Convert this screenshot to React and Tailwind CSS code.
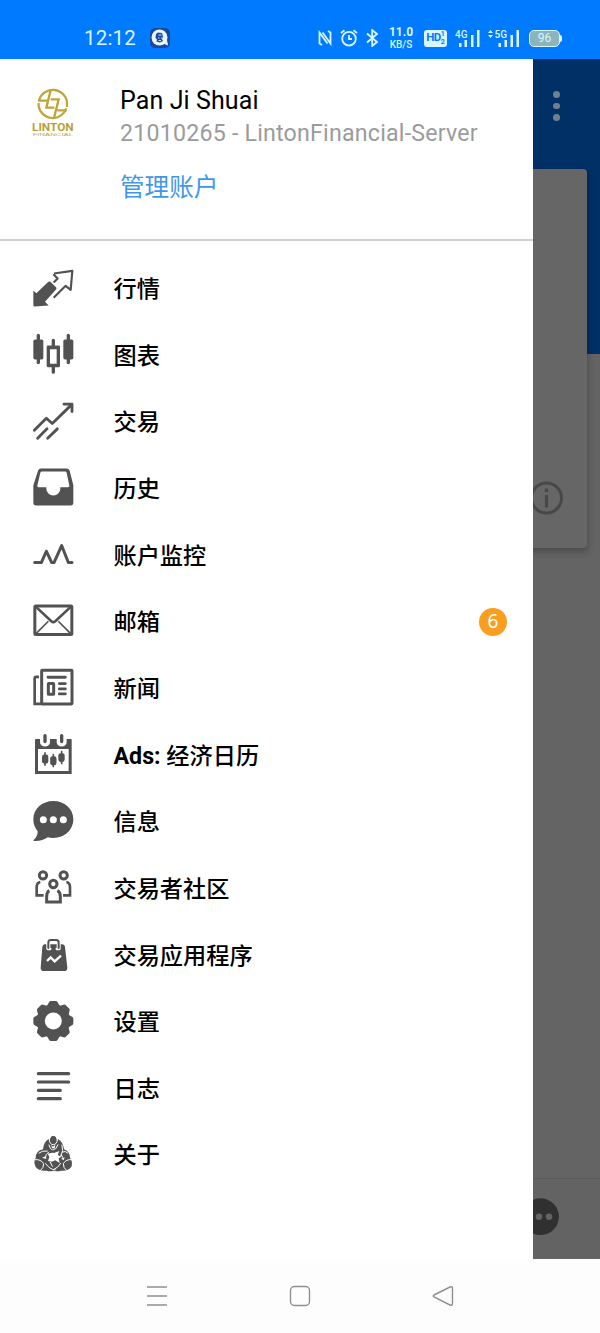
import React from "react";

const INK = "#525252";

function Quotes() {
  return (
    <>
      <path d="M40 105L49 113L85 79Q89 76 93 80L108 95Q111 98 108 102L75 139L86 150L44 153Q40 153 40 149Z" fill={INK} />
      <path d="M100 56L113 69L101 81M101 127L137 91L152 103L157 46L102 54" fill="none" stroke={INK} strokeWidth="6.500" strokeLinejoin="round" />
    </>
  );
}

function Charts() {
  return (
    <g fill={INK}>
      <rect x="40" y="254" width="30" height="60" rx="5" />
      <rect x="50" y="237" width="10" height="91" rx="5" />
      <rect x="130" y="254" width="30" height="60" rx="5" />
      <rect x="140" y="237" width="10" height="91" rx="5" />
      <path d="M95 257a5 5 0 0 1 10 0v15h11a4 4 0 0 1 4 4v57a4 4 0 0 1-4 4h-11v15a5 5 0 0 1-10 0v-15H84a4 4 0 0 1-4-4v-57a4 4 0 0 1 4-4h11zM90 283v44h20v-44z" />
    </g>
  );
}

function Trade() {
  return (
    <g fill="none" stroke={INK} strokeWidth="8.500" strokeLinecap="round" strokeLinejoin="round">
      <path d="M43 525 L79 489 L97 505 L154 449" />
      <path d="M132 447 H156 V469" />
      <path d="M53 549 L81 521 M83 549 L112 521" />
    </g>
  );
}

function History() {
  return (
    <path
      fillRule="evenodd"
      fill={INK}
      d="M62 42H140Q146 42 149 49L160 92V145Q160 153 152 153H48Q40 153 40 145V92L54 49Q57 42 62 42ZM66 51Q62 51 61 55L52 93Q51 98 56 98H79V103A21 20 0 0 0 121 103V98H144Q149 98 148 93L140 55Q139 51 135 51Z"
    />
  );
}

function Monitor() {
  return <path d="M44 323H64L79 289L95 323H102L125 272L145 323H156" fill="none" stroke={INK} strokeWidth="9" strokeLinecap="round" strokeLinejoin="round" />;
}

function Mail() {
  return (
    <g fill="none" stroke={INK}>
      <rect x="44.5" y="452" width="111" height="86" rx="3" strokeWidth="9" />
      <path d="M48 455L94 498Q100 503 106 498L152 455" strokeWidth="8" />
      <path d="M48 535L85 498M152 535L115 498" strokeWidth="5" />
    </g>
  );
}

function News() {
  return (
    <g fill="none" stroke={INK}>
      <rect x="65" y="47" width="91" height="101" rx="2" strokeWidth="9" />
      <path d="M57 67H48Q44 67 44 72V148H66" strokeWidth="8" />
      <path d="M84 68H136M118 87H136M118 103H136M118 118H136" strokeWidth="8.500" strokeLinecap="round" />
      <rect x="85" y="87" width="16" height="32" rx="1" strokeWidth="9" />
    </g>
  );
}

function Calendar() {
  return (
    <>
      <path fillRule="evenodd" fill={INK} d="M45 254Q45 252 48 252H60V262A14 12 0 0 0 90 262V252H110V262A14 12 0 0 0 140 262V252H153Q155 252 155 254V357H45ZM54 282V348H146V282Z" />
      <g stroke={INK} strokeLinecap="round">
        <path d="M75 242V260M125 242V260" strokeWidth="10" />
        <path d="M75 294V331M100 299V335M125 290V326" strokeWidth="5" />
      </g>
      <g fill={INK}>
        <rect x="66" y="299" width="19" height="27" rx="7" />
        <rect x="90.500" y="304" width="19" height="27" rx="7" />
        <rect x="115" y="295" width="19" height="26" rx="7" />
      </g>
    </>
  );
}

function Chat() {
  return (
    <>
      <path fill={INK} d="M100 437C134 437 160 461 160 492S134 548 100 548Q91 548 83 546Q68 558 42 557Q39 557 41 554Q53 544 53 528Q40 512 40 492C40 461 66 437 100 437Z" />
      <g fill="#fff">
        <circle cx="70" cy="493" r="10.500" />
        <circle cx="100" cy="493" r="10.500" />
        <circle cx="130" cy="493" r="10.500" />
      </g>
    </>
  );
}

function Community() {
  return (
    <g fill="none" stroke={INK} strokeWidth="9">
      <circle cx="69" cy="62" r="11" />
      <circle cx="131" cy="62" r="11" />
      <circle cx="100" cy="88" r="11" />
      <path d="M61 82Q50 84 50 98V122H71M139 82Q150 84 150 98V122H129" strokeWidth="8" />
      <path d="M88 108Q80 112 80 125V142H121V125Q121 112 112 108" strokeWidth="9" />
    </g>
  );
}

function Bag() {
  return (
    <>
      <path fill={INK} d="M74 268H126Q134 268 135 276L142 338Q142 348 133 348H71Q62 348 62 338L67 276Q68 268 74 268Z" />
      <g fill="none" strokeLinecap="round" strokeLinejoin="round">
        <path d="M85 279V262Q85 255 92 255H109Q116 255 116 262V279" stroke="#fff" strokeWidth="12" />
        <path d="M83 282H91M110 282H118" stroke="#fff" strokeWidth="7" />
        <path d="M85 279V263Q85 255 92 255H109Q116 255 116 263V279" stroke={INK} strokeWidth="6" />
        <path d="M81 318L92 307L104 319L123 302" stroke="#fff" strokeWidth="7" strokeLinecap="butt" strokeLinejoin="miter" />
      </g>
    </>
  );
}

const toothAngles = [0, 45, 90, 135, 180, 225, 270, 315];

function Gear() {
  return (
    <>
      <circle cx="100" cy="497" r="50" fill={INK} />
      {toothAngles.map((angle) => (
        <path key={angle} d="M79 455L87 441Q89 437 93 437H107Q111 437 113 441L121 455Z" fill={INK} transform={`rotate(${angle} 100 497)`} />
      ))}
      <circle cx="100" cy="497" r="25.500" fill="#fff" />
    </>
  );
}

function Journal() {
  return <path d="M55 57H146M55 82H146M55 107H121M55 132H121" stroke={INK} strokeWidth="9.500" strokeLinecap="round" />;
}

function About() {
  return (
    <>
      <g fill={INK}>
        <path d="M85 253Q72 260 69 283Q48 286 47 309Q40 320 46 334Q55 350 80 347Q91 351 100 347Q112 351 123 347Q147 349 155 334Q158 318 150 308Q149 288 132 283Q129 260 114 252Z" />
        <ellipse cx="100" cy="254" rx="10" ry="12" />
      </g>
      <g fill="none" stroke="#fff" strokeWidth="3" strokeLinecap="round">
        <ellipse cx="100" cy="255" rx="12" ry="14" />
        <path d="M87 270Q92 286 99 285Q108 285 114 269" />
        <path d="M46 314Q62 312 71 326Q72 338 61 347M154 314Q138 312 130 326Q129 338 140 347" />
        <path d="M57 294Q66 286 82 288M143 294Q137 286 127 291M126 270Q132 286 122 305M77 326Q88 343 106 345M122 325Q113 340 102 343" />
        <path d="M86 291Q76 298 76 308M91 322L97 334M124 299L128 307" />
      </g>
      <path fill="#fff" d="M83 296L96 293L104 293L118 288L113 300L124 305L116 310L119 324L106 316L95 320L84 318L88 306Z" />
      <path fill="#fff" d="M94 270L99 275L106 269L104 280H96ZM66 308L77 304L79 312ZM123 311L134 307L131 315Z" />
      <path fill={INK} d="M91 286L97 284L99 288L104 284L109 288L105 292H94Z" />
    </>
  );
}

const items = [
  { label: "行情", icon: Quotes, box: "33 28.5 132 144" },
  { label: "图表", icon: Charts, box: "33 228.5 132 144" },
  { label: "交易", icon: Trade, box: "33 428.4 132 144" },
  { label: "历史", icon: History, box: "33 28.4 132 144" },
  { label: "账户监控", icon: Monitor, box: "33 228.3 132 144" },
  { label: "邮箱", icon: Mail, box: "33 428.3 132 144", badge: 6 },
  { label: "新闻", icon: News, box: "33 28.2 132 144" },
  { label: "经济日历", prefix: "Ads:", icon: Calendar, box: "33 228.2 132 144" },
  { label: "信息", icon: Chat, box: "33 428.1 132 144" },
  { label: "交易者社区", icon: Community, box: "33 28 132 144" },
  { label: "交易应用程序", icon: Bag, box: "33 228 132 144" },
  { label: "设置", icon: Gear, box: "33 428 132 144" },
  { label: "日志", icon: Journal, box: "33 28 132 144" },
  { label: "关于", icon: About, box: "33 228 132 144" },
];

function StatusBar() {
  return (
    <header className="flex h-[59px] shrink-0 items-center bg-[#007aff] pt-[17px] pl-[84px] text-[#d9f6ff]">
      <span className="w-[66px] text-[20.5px] leading-none tracking-[0.2px]">12:12</span>
      <svg className="size-5" viewBox="0 0 20 20">
        <rect width="20" height="20" rx="5" fill="#164a9f" />
        <ellipse cx="9.500" cy="9.500" rx="8" ry="8" fill="#e8f4ff" />
        <path d="M13 15.500L18 17.500L17 12Z" fill="#e8f4ff" />
        <path d="M6 6L8 4.500L12 5L13 8.500L12 11L13 13L10 14.500L6.500 13.500L7 11.500L5.500 10Z" fill="#164a9f" />
        <path d="M8.500 7H11.500M8 10H9.500M11 10H12M8.500 12.500H11" stroke="#e8f4ff" strokeWidth="0.900" />
      </svg>
      <svg className="ml-[148px] h-[18px] w-[14px]" viewBox="0 0 14 18" fill="none" stroke="currentColor" strokeWidth="1.800">
        <path d="M4 16L1.500 14.500V3.500L9.500 14.500M10 2L12.500 3.500V14.500L4.500 3.500" />
      </svg>
      <svg className="ml-2 size-[18px]" viewBox="0 0 18 18" fill="none" stroke="currentColor" strokeWidth="1.800">
        <circle cx="9" cy="9.700" r="6.800" />
        <path d="M9 6V10H12M1 4L4.500 1.300M17 4L13.500 1.300" />
      </svg>
      <svg className="ml-[7px] h-[18px] w-[15px]" viewBox="0 0 15 18" fill="none" stroke="currentColor" strokeWidth="1.800">
        <path d="M2 4.500L12 13L7.200 17V1L12 5L2 13.500" />
      </svg>
      <div className="ml-[8px] flex w-[26px] flex-col items-center">
        <span className="text-[12px] leading-[13px] font-bold">11.0</span>
        <span className="text-[10px] leading-[11px] font-medium">KB/S</span>
      </div>
      <div className="ml-[10px] flex h-[17px] w-[23px] items-center justify-center rounded-[3px] bg-[#d9f6ff] text-[#007aff]">
        <span className="text-[11.5px] leading-none font-bold tracking-[-0.5px]">HD</span>
        <span className="flex flex-col text-[7px] leading-[8px] font-bold">
          <span>1</span>
          <span>2</span>
        </span>
      </div>
      <svg className="ml-[8px] h-[18px] w-[26px]" viewBox="0 0 26 18" fill="currentColor">
        <text x="0" y="8.500" fontSize="10.500" fontWeight="500" fontFamily="Roboto" textLength="12.500" lengthAdjust="spacingAndGlyphs">4G</text>
        <path d="M4 14H6.500V18H4ZM9.500 11H12V18H9.500ZM16 6H18.500V18H16ZM22 1H24.500V18H22Z" />
      </svg>
      <svg className="ml-[7px] h-[18px] w-[33px]" viewBox="0 0 33 18" fill="currentColor">
        <path d="M0 4L2.500 1L5 4ZM0 6L2.500 9L5 6Z" />
        <text x="6.500" y="8.500" fontSize="10.500" fontWeight="500" fontFamily="Roboto" textLength="12.500" lengthAdjust="spacingAndGlyphs">5G</text>
        <path d="M10.500 14H13V18H10.500ZM16.500 11H19V18H16.500ZM22.500 6H25V18H22.500ZM28.500 1H31V18H28.500Z" />
      </svg>
      <div className="ml-[8px] flex items-center">
        <span className="flex h-[17px] w-[31px] items-center justify-center rounded-[5px] border-[1.5px] border-[#d9f6ff] bg-[#8bb4bc] text-[12px] leading-none">96</span>
        <span className="h-[7px] w-[2px] rounded-r bg-[#d9f6ff]" />
      </div>
    </header>
  );
}

function Logo() {
  return (
    <svg className="h-[52px] w-11" viewBox="93 80 132 156">
      <g fill="none" stroke="#bfa536">
        <path d="M117 121A43 43 0 0 1 201 124L201 140M199 144A43 43 0 0 1 116 138V128" strokeWidth="6.500" />
        <path d="M114 121H143M152 90L139 142H163M152 117H176L162 173M172 150H200" strokeWidth="7" />
      </g>
      <text x="96" y="213" fontSize="30" fontWeight="700" fontFamily="Roboto" fill="#b99f37" textLength="125" lengthAdjust="spacingAndGlyphs">LINTON</text>
      <text x="98" y="228" fontSize="13" fontFamily="Liberation Sans" fill="#b9a960" textLength="121" lengthAdjust="spacingAndGlyphs">FINANCIAL</text>
    </svg>
  );
}

function Drawer() {
  return (
    <aside className="flex w-[533px] shrink-0 flex-col bg-white">
      <section className="flex h-[182px] shrink-0 border-b-2 border-[#d0d0d0] pl-[31px]">
        <div className="pt-[28px]">
          <Logo />
        </div>
        <div className="flex flex-col pt-[26px] pl-[45px] whitespace-nowrap">
          <div className="text-[25px] leading-8 tracking-[0.1px] text-black">Pan Ji Shuai</div>
          <div className="text-[23.2px] leading-8 tracking-[0.21px] text-[#9b9b9b]">21010265 - LintonFinancial-Server</div>
          <div className="mt-[23px] text-[24.6px] leading-8 text-[#3f97ea]">管理账户</div>
        </div>
      </section>
      <nav className="mt-[14.2px] grid h-[933.1px] grid-rows-14">
        {items.map(({ label, prefix, icon: Icon, box, badge }) => (
          <a key={label} className="flex items-center pr-[26px] pl-[31px]">
            <svg className="h-12 w-11 shrink-0" viewBox={box}>
              <Icon />
            </svg>
            <span className="ml-[38.500px] flex-1 pt-[1px] text-[23.2px] leading-8 font-medium text-black">
              {prefix && <b className="font-bold">{prefix} </b>}
              {label}
            </span>
            {badge && (
              <span className="flex size-7 items-center justify-center rounded-full bg-[#fa9e1f] font-['Noto_Sans',sans-serif] text-[19px] leading-none text-white">{badge}</span>
            )}
          </a>
        ))}
      </nav>
    </aside>
  );
}

function DimmedPage() {
  return (
    <main className="grid w-[67px] grid-cols-[67px] grid-rows-[1200px] overflow-hidden bg-[#666]">
      <div className="col-start-1 row-start-1 flex flex-col">
        <div className="flex h-[295px] bg-[#003066] pt-8 pl-5">
          <div className="flex flex-col gap-[5px]">
            <i className="size-[6.7px] rounded-full bg-[#71808b]" />
            <i className="size-[6.7px] rounded-full bg-[#71808b]" />
            <i className="size-[6.7px] rounded-full bg-[#71808b]" />
          </div>
        </div>
        <div className="flex-1 bg-[#646464]" />
        <div className="h-[81px] border-t border-[#595959] bg-[#636363] pt-[19px]">
          <svg className="h-[38px] w-[27px]" viewBox="0 0 27 38">
            <circle cx="7.500" cy="18.700" r="18.400" fill="#303030" />
            <circle cx="6" cy="18.700" r="3.300" fill="#636363" />
            <circle cx="16" cy="18.700" r="3.300" fill="#636363" />
          </svg>
        </div>
      </div>
      <div className="z-10 col-start-1 row-start-1 mt-[110px] -ml-3 flex h-[379px] w-[66px] items-end rounded-r-[4px] bg-[#666] pb-[33.5px] pl-3 shadow-[1px_4px_7px_rgba(0,0,0,0.25)]">
        <svg className="h-[34px] w-[31px]" viewBox="0 0 31 34" fill="none" stroke="#484848" strokeWidth="3">
          <circle cx="13.500" cy="17" r="15" />
          <path d="M13.500 14V26.500M13.500 7.500V11" strokeWidth="3.200" />
        </svg>
      </div>
    </main>
  );
}

function SystemNav() {
  return (
    <footer className="flex h-[74px] items-center justify-between bg-[#fdfdfd] px-[145px] text-[#8f8f8f]">
      <svg className="h-6 w-6" viewBox="0 0 24 24" stroke="currentColor" strokeWidth="1.500">
        <path d="M2 3H22M2 12H22M2 21H22" />
      </svg>
      <svg className="h-6 w-6" viewBox="0 0 24 24" fill="none" stroke="currentColor" strokeWidth="1.400">
        <rect x="2.500" y="2.500" width="19" height="19" rx="4" />
      </svg>
      <svg className="h-6 w-6" viewBox="0 0 24 24" fill="none" stroke="currentColor" strokeWidth="1.400">
        <path d="M3 11L19 3Q21.500 2 21.500 4.500V19.500Q21.500 22 19 21L3 13Q1.500 12 3 11Z" />
      </svg>
    </footer>
  );
}

export default function App() {
  return (
    <div className="flex h-[1333px] w-[600px] flex-col overflow-hidden bg-white font-[Roboto,'Noto_Sans_CJK_SC',sans-serif]">
      <StatusBar />
      <div className="flex h-[1200px] shrink-0">
        <Drawer />
        <DimmedPage />
      </div>
      <SystemNav />
    </div>
  );
}
